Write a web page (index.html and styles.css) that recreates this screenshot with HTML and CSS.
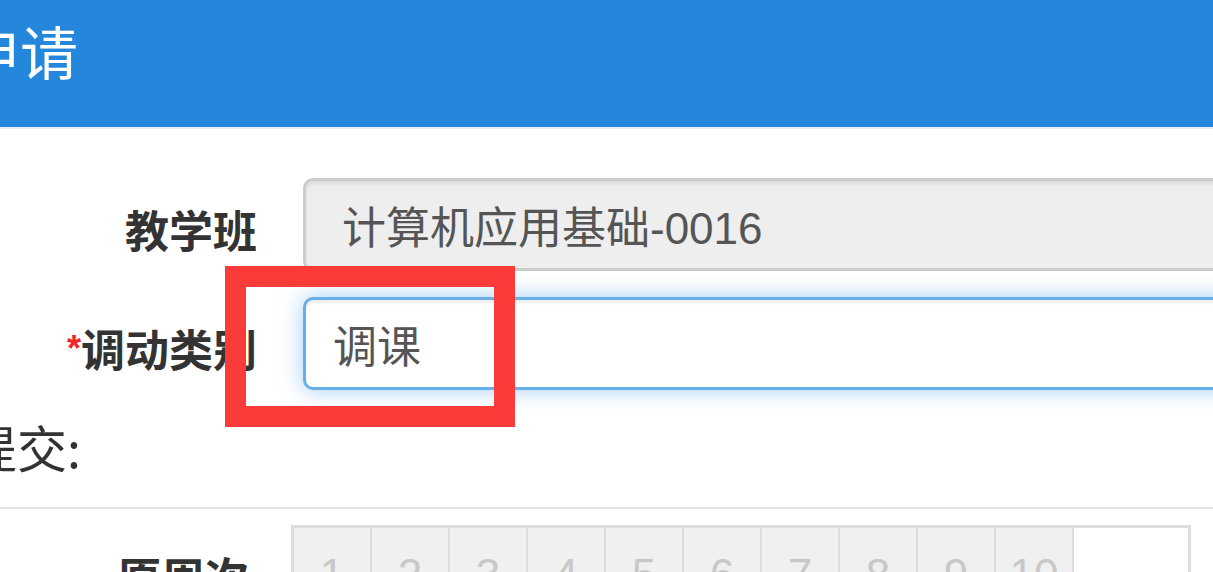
FILE: index.html
```html
<!DOCTYPE html>
<html lang="zh-CN">
<head>
    <meta charset="UTF-8">
    <meta name="viewport" content="width=device-width, initial-scale=1.0">
    <title>调课申请</title>
    <link rel="stylesheet" href="styles.css">
</head>
<body>

    <div class="modal-header">
        <h4 class="modal-title">调课申请</h4>
    </div>

    <div class="modal-body">
        <div class="form-row">
            <label class="control-label">教学班</label>
            <input type="text" class="form-control readonly" value="计算机应用基础-0016" readonly>
        </div>
        <div class="form-row">
            <label class="control-label"><span class="required">*</span>调动类别</label>
            <input type="text" class="form-control focused" value="调课">
        </div>

        <p class="submit-title">提交:</p>
    </div>

    <hr class="divider">

    <div class="week-row">
        <label class="control-label">原周次</label>
        <table class="week-table">
            <tr>
                <td>1</td>
                <td>2</td>
                <td>3</td>
                <td>4</td>
                <td>5</td>
                <td>6</td>
                <td>7</td>
                <td>8</td>
                <td>9</td>
                <td>10</td>
                <td class="empty"></td>
            </tr>
        </table>
    </div>

    <div class="highlight-box"></div>

</body>
</html>
```

FILE: styles.css
```css
html, body {
    overflow: hidden;
}
body {
    margin: 0;
    background: #fff;
    font-family: "Liberation Sans", "Noto Sans CJK SC", sans-serif;
    color: #333;
    width: 1213px;
    height: 572px;
    position: relative;
}
.modal-header {
    height: 129px;
    box-sizing: border-box;
    background-color: #2487dc;
    border-bottom: 2px solid #e6edf4;
    display: flex;
    align-items: center;
    padding-bottom: 18px;
}
.modal-title {
    margin: 0 0 0 -154px;
    font-size: 58px;
    font-weight: normal;
    line-height: 1;
    color: #fff;
    white-space: nowrap;
}
.modal-body {
    padding-top: 49px;
}
.form-row {
    display: grid;
    grid-template-columns: 257px 1000px;
    column-gap: 46px;
    margin-bottom: 26px;
}
.control-label {
    font-family: "Noto Sans CJK SC", sans-serif;
    font-size: 44px;
    font-weight: bold;
    line-height: 63px;
    padding-top: 20px;
    text-align: right;
    white-space: nowrap;
}
.required {
    color: #f0262b;
    font-family: "Liberation Sans", sans-serif;
    font-size: 36px;
    font-weight: bold;
    vertical-align: 6px;
}
.form-control {
    box-sizing: border-box;
    height: 93px;
    font-family: "Liberation Sans", "Noto Sans CJK SC", sans-serif;
    font-size: 44px;
    color: #555;
    border: 3px solid #ccc;
    border-radius: 10px;
    padding: 0 30px;
    outline: none;
    box-shadow: inset 0 3px 3px rgba(0, 0, 0, 0.075);
}
.form-control.readonly {
    background-color: #eee;
    padding-left: 36px;
}
.form-control.focused {
    background-color: #fff;
    border-color: #66afe9;
    padding-left: 27px;
    box-shadow: inset 0 3px 3px rgba(0, 0, 0, 0.075), 0 0 22px rgba(102, 175, 233, 0.6);
}
.submit-title {
    margin: 16px 0 0 -33px;
    font-family: "Noto Sans CJK SC", sans-serif;
    font-size: 50px;
    line-height: 60px;
    color: #333;
    white-space: nowrap;
}
.divider {
    margin: 31px 0 0;
    border: 0;
    border-top: 2px solid #e6e6e6;
}
.week-row {
    display: grid;
    grid-template-columns: 249px max-content;
    column-gap: 42px;
    margin-top: 16px;
}
.week-table {
    justify-self: start;
    border-collapse: collapse;
    border: 3px solid #ddd;
    table-layout: fixed;
}
.week-table td {
    width: 76px;
    height: 90px;
    border: 2px solid #ddd;
    background: #f0f0f0;
    color: #c8c8c8;
    font-size: 44px;
    text-align: center;
    vertical-align: top;
    padding: 22px 0 0;
}
.week-table td.empty {
    width: 114px;
    background: #fff;
}
.highlight-box {
    position: absolute;
    left: 225px;
    top: 266px;
    width: 290px;
    height: 161px;
    box-sizing: border-box;
    border: 21px solid #fb3a3a;
}
```
